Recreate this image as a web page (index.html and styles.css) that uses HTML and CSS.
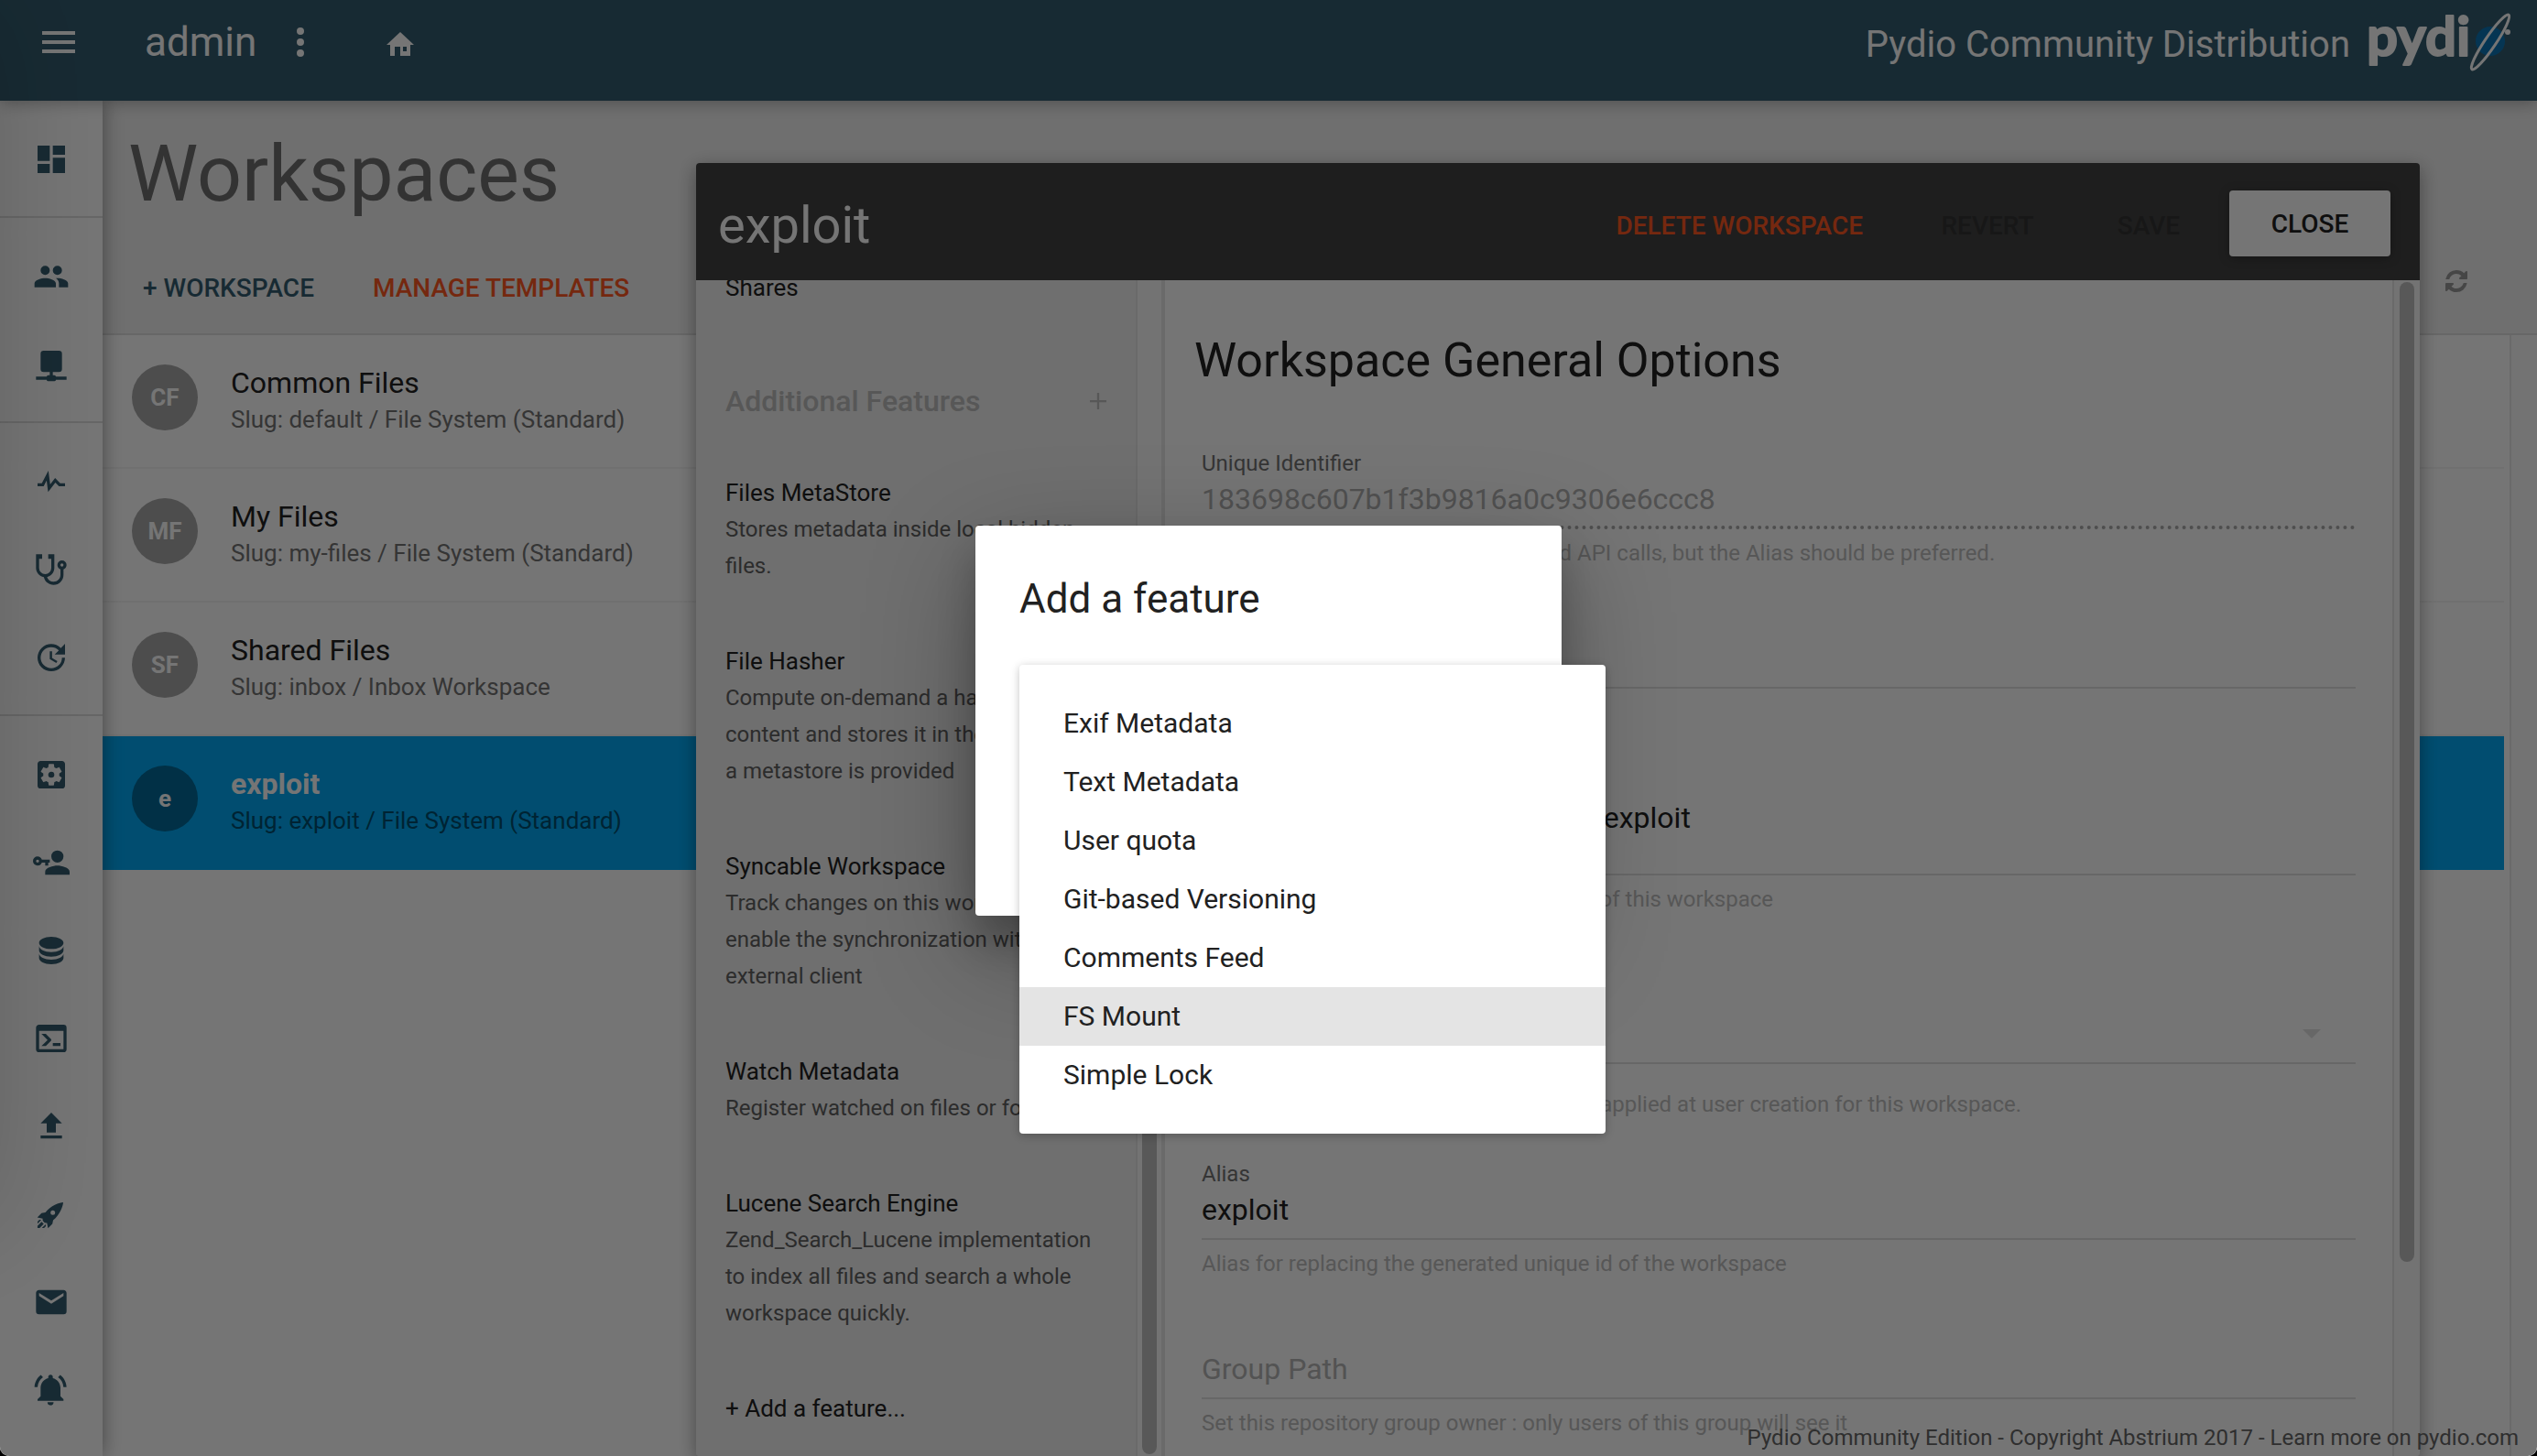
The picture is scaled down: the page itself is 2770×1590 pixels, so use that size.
FILE: index.html
```html
<!DOCTYPE html>
<html lang="en">
<head>
<meta charset="utf-8">
<title>Pydio - Workspaces</title>
<link rel="stylesheet" href="styles.css">
</head>
<body>
<div class="app">
  <header class="topbar">
    <button class="icon-button" aria-label="Menu"><svg class="icon-lg" viewBox="0 0 24 24"><path d="M3,6H21V8H3V6M3,11H21V13H3V11M3,16H21V18H3V16Z"/></svg></button>
    <span class="user">admin</span>
    <button class="icon-button more" aria-label="More"><svg class="icon-lg" viewBox="0 0 24 24"><path d="M12,16A2,2 0 0,1 14,18A2,2 0 0,1 12,20A2,2 0 0,1 10,18A2,2 0 0,1 12,16M12,10A2,2 0 0,1 14,12A2,2 0 0,1 12,14A2,2 0 0,1 10,12A2,2 0 0,1 12,10M12,4A2,2 0 0,1 14,6A2,2 0 0,1 12,8A2,2 0 0,1 10,6A2,2 0 0,1 12,4Z"/></svg></button>
    <button class="icon-button home" aria-label="Home"><svg class="icon-home" viewBox="0 0 30 26"><path fill-rule="evenodd" d="M15 0L30 14H26V26H15V16H9V26H4V14H0ZM18 16V21H22V16Z"/></svg></button>
    <span class="product">Pydio Community Distribution</span>
    <svg class="logo" viewBox="0 0 160 70" role="img" aria-label="pydio">
      <circle cx="135" cy="34" r="16" fill="#0b74b5"/>
      <ellipse cx="135" cy="35" rx="36" ry="6" transform="rotate(-56 135 35)" fill="none" stroke="#fff" stroke-width="3"/>
      <circle cx="154" cy="24" r="3" fill="#fff"/>
      <text x="0" y="50" class="logo-text">pydi</text>
    </svg>
  </header>

  <div class="below">
    <nav class="sidebar">
      <div class="group">
        <a href="#" aria-label="Dashboard"><svg viewBox="0 0 24 24"><path d="M13,3V9H21V3M13,21H21V11H13M3,21H11V15H3M3,13H11V3H3V13Z"/></svg></a>
      </div>
      <div class="group">
        <a href="#" aria-label="Users"><svg viewBox="0 0 24 24"><path d="M16,13C15.71,13 15.38,13 15.03,13.05C16.19,13.89 17,15 17,16.5V19H23V16.5C23,14.17 18.33,13 16,13M8,13C5.67,13 1,14.17 1,16.5V19H15V16.5C15,14.17 10.33,13 8,13M8,11A3,3 0 0,0 11,8A3,3 0 0,0 8,5A3,3 0 0,0 5,8A3,3 0 0,0 8,11M16,11A3,3 0 0,0 19,8A3,3 0 0,0 16,5A3,3 0 0,0 13,8A3,3 0 0,0 16,11Z"/></svg></a>
        <a href="#" aria-label="Workspaces"><svg viewBox="0 0 24 24"><path d="M17,3A2,2 0 0,1 19,5V15A2,2 0 0,1 17,17H13V19H14A1,1 0 0,1 15,20H22V22H15A1,1 0 0,1 14,23H10A1,1 0 0,1 9,22H2V20H9A1,1 0 0,1 10,19H11V17H7A2,2 0 0,1 5,15V5A2,2 0 0,1 7,3H17Z"/></svg></a>
      </div>
      <div class="group">
        <a href="#" aria-label="Activity"><svg viewBox="0 0 24 24"><path d="M3,13H5.79L10.1,4.79L11.28,13.75L14.5,9.66L17.83,13H21V15H17L14.67,12.67L9.92,18.73L8.94,11.31L7,15H3V13Z"/></svg></a>
        <a href="#" aria-label="Diagnostics"><svg viewBox="0 0 24 24"><path d="M19,8C19.56,8 20,8.43 20,9A1,1 0 0,1 19,10C18.43,10 18,9.55 18,9C18,8.43 18.43,8 19,8M2,2V11C2,13.96 4.19,16.5 7.14,16.91C7.76,19.92 10.42,22 13.5,22A6.5,6.5 0 0,0 20,15.5V11.81C21.16,11.39 22,10.29 22,9A3,3 0 0,0 19,6A3,3 0 0,0 16,9C16,10.29 16.84,11.4 18,11.81V15.41C18,17.91 16,19.91 13.5,19.91C11.5,19.91 9.82,18.7 9.22,16.9C12,16.3 14,13.8 14,11V2H10V5H12V11A4,4 0 0,1 8,15A4,4 0 0,1 4,11V5H6V2H2Z"/></svg></a>
        <a href="#" aria-label="Updates"><svg viewBox="0 0 24 24"><path d="M21,10.12H14.22L16.96,7.3C14.23,4.6 9.81,4.5 7.08,7.2C4.35,9.91 4.35,14.28 7.08,17C9.81,19.7 14.23,19.7 16.96,17C18.32,15.65 19,14.08 19,12.1H21C21,14.08 20.12,16.65 18.36,18.39C14.85,21.87 9.15,21.87 5.64,18.39C2.14,14.92 2.11,9.28 5.62,5.81C9.13,2.34 14.76,2.34 18.27,5.81L21,3V10.12M12.5,8V12.25L16,14.33L15.28,15.54L11,13V8H12.5Z"/></svg></a>
      </div>
      <div class="group">
        <a href="#" aria-label="Settings"><svg viewBox="0 0 24 24"><path d="M17.25,12C17.25,12.23 17.23,12.46 17.2,12.68L18.68,13.84C18.81,13.95 18.85,14.13 18.76,14.29L17.36,16.71C17.27,16.86 17.09,16.92 16.93,16.86L15.19,16.16C14.83,16.44 14.43,16.67 14,16.85L13.75,18.7C13.72,18.87 13.57,19 13.4,19H10.6C10.43,19 10.28,18.87 10.25,18.7L10,16.85C9.56,16.67 9.17,16.44 8.81,16.16L7.07,16.86C6.91,16.92 6.73,16.86 6.64,16.71L5.24,14.29C5.15,14.13 5.19,13.95 5.32,13.84L6.8,12.68C6.77,12.46 6.75,12.23 6.75,12C6.75,11.77 6.77,11.54 6.8,11.32L5.32,10.16C5.19,10.05 5.15,9.86 5.24,9.71L6.64,7.29C6.73,7.13 6.91,7.07 7.07,7.13L8.81,7.84C9.17,7.56 9.56,7.32 10,7.15L10.25,5.29C10.28,5.13 10.43,5 10.6,5H13.4C13.57,5 13.72,5.13 13.75,5.29L14,7.15C14.43,7.32 14.83,7.56 15.19,7.84L16.93,7.13C17.09,7.07 17.27,7.13 17.36,7.29L18.76,9.71C18.85,9.86 18.81,10.05 18.68,10.16L17.2,11.32C17.23,11.54 17.25,11.77 17.25,12M19,3H5C3.89,3 3,3.89 3,5V19A2,2 0 0,0 5,21H19A2,2 0 0,0 21,19V5C21,3.89 20.1,3 19,3M12,10C10.89,10 10,10.89 10,12A2,2 0 0,0 12,14A2,2 0 0,0 14,12A2,2 0 0,0 12,10Z"/></svg></a>
        <a href="#" aria-label="Authentication"><svg viewBox="0 0 24 24"><path d="M11,10V12H10V14H8V12H5.83C5.42,13.17 4.31,14 3,14A3,3 0 0,1 0,11A3,3 0 0,1 3,8C4.31,8 5.42,8.83 5.83,10H11M3,10A1,1 0 0,0 2,11A1,1 0 0,0 3,12A1,1 0 0,0 4,11A1,1 0 0,0 3,10M16,14C18.67,14 24,15.34 24,18V20H8V18C8,15.34 13.33,14 16,14M16,12A4,4 0 0,1 12,8A4,4 0 0,1 16,4A4,4 0 0,1 20,8A4,4 0 0,1 16,12Z"/></svg></a>
        <a href="#" aria-label="Storage"><svg viewBox="0 0 24 24"><path d="M12,3C7.58,3 4,4.79 4,7C4,9.21 7.58,11 12,11C16.42,11 20,9.21 20,7C20,4.79 16.42,3 12,3M4,9V12C4,14.21 7.58,16 12,16C16.42,16 20,14.21 20,12V9C20,11.21 16.42,13 12,13C7.58,13 4,11.21 4,9M4,14V17C4,19.21 7.58,21 12,21C16.42,21 20,19.21 20,17V14C20,16.21 16.42,18 12,18C7.58,18 4,16.21 4,14Z"/></svg></a>
        <a href="#" aria-label="Console"><svg viewBox="0 0 24 24"><path d="M20,19V7H4V19H20M20,3A2,2 0 0,1 22,5V19A2,2 0 0,1 20,21H4A2,2 0 0,1 2,19V5C2,3.89 2.9,3 4,3H20M13,17V15H18V17H13M9.58,13L5.57,9H8.4L11.7,12.3C12.09,12.69 12.09,13.33 11.7,13.72L8.42,17H5.59L9.58,13Z"/></svg></a>
        <a href="#" aria-label="Uploaders"><svg viewBox="0 0 24 24"><path d="M9,16V10H5L12,3L19,10H15V16H9M5,20V18H19V20H5Z"/></svg></a>
        <a href="#" aria-label="Boosters"><svg viewBox="0 0 24 24"><path d="M2.81,14.12L5.64,11.29L8.17,10.79C11.39,6.41 17.55,4.22 19.78,4.22C19.78,6.45 17.59,12.61 13.21,15.83L12.71,18.36L9.88,21.19L9.17,17.66C7.76,17.66 7.76,17.66 7.05,16.95C6.34,16.24 6.34,16.24 6.34,14.83L2.81,14.12M5.64,16.95L7.05,18.36L4.39,21.03H2.97V19.61L5.64,16.95M4.22,15.54L5.46,15.71L3,18.16V16.74L4.22,15.54M8.29,18.54L8.46,19.78L7.26,21H5.84L8.29,18.54M13,9.5A1.5,1.5 0 0,0 11.5,11A1.5,1.5 0 0,0 13,12.5A1.5,1.5 0 0,0 14.5,11A1.5,1.5 0 0,0 13,9.5Z"/></svg></a>
        <a href="#" aria-label="Mailers"><svg viewBox="0 0 24 24"><path d="M20,8L12,13L4,8V6L12,11L20,6M20,4H4C2.89,4 2,4.89 2,6V18A2,2 0 0,0 4,20H20A2,2 0 0,0 22,18V6C22,4.89 21.1,4 20,4Z"/></svg></a>
        <a href="#" aria-label="Notifications"><svg viewBox="0 0 24 24"><path d="M11.5,22C11.64,22 11.77,22 11.9,21.96C12.55,21.82 13.09,21.38 13.34,20.78C13.44,20.54 13.5,20.27 13.5,20H9.5A2,2 0 0,0 11.5,22M18,10.5C18,7.43 15.86,4.86 13,4.18V3.5A1.5,1.5 0 0,0 11.5,2A1.5,1.5 0 0,0 10,3.5V4.18C7.13,4.86 5,7.43 5,10.5V16L3,18V19H20V18L18,16M19.97,10H21.97C21.82,6.79 20.24,3.97 17.85,2.15L16.42,3.58C18.46,5 19.82,7.35 19.97,10M6.58,3.58L5.15,2.15C2.76,3.97 1.18,6.79 1,10H3C3.18,7.35 4.54,5 6.58,3.58Z"/></svg></a>
      </div>
    </nav>

    <main class="main">
      <div class="page-head">
        <h1>Workspaces</h1>
        <div class="page-actions">
          <button class="flat primary">+ WORKSPACE</button>
          <button class="flat accent">MANAGE TEMPLATES</button>
          <button class="icon-button refresh" aria-label="Refresh"><svg class="icon-refresh" viewBox="0 0 1536 1536"><path d="M1511 928q0 5-1 7-64 268-268 434.500t-478 166.500q-146 0-282.500-55t-243.500-157l-129 129q-19 19-45 19t-45-19-19-45v-448q0-26 19-45t45-19h448q26 0 45 19t19 45-19 45l-137 137q71 66 161 102t187 36q134 0 250-65t186-179q11-17 53-117 8-23 30-23h192q13 0 22.500 9.500t9.500 22.500zm25-800v448q0 26-19 45t-45 19h-448q-26 0-45-19t-19-45 19-45l138-138q-148-137-349-137-134 0-250 65t-186 179q-11 17-53 117-8 23-30 23h-199q-13 0-22.500-9.500t-9.500-22.500v-7q65-268 270-434.500t480-166.500q146 0 284 55.500t245 156.500l130-129q19-19 45-19t45 19 19 45z"/></svg></button>
        </div>
      </div>
      <div class="list-area">
        <ul class="list">
          <li><span class="avatar">CF</span><div class="entry"><div class="name">Common Files</div><div class="slug">Slug: default / File System (Standard)</div></div></li>
          <li><span class="avatar">MF</span><div class="entry"><div class="name">My Files</div><div class="slug">Slug: my-files / File System (Standard)</div></div></li>
          <li><span class="avatar">SF</span><div class="entry"><div class="name">Shared Files</div><div class="slug">Slug: inbox / Inbox Workspace</div></div></li>
          <li class="selected"><span class="avatar">e</span><div class="entry"><div class="name">exploit</div><div class="slug">Slug: exploit / File System (Standard)</div></div></li>
        </ul>
        <div class="track"></div>
      </div>
    </main>
  </div>

  <section class="editor" aria-label="Workspace editor">
    <header class="editor-head">
      <h2>exploit</h2>
      <button class="flat accent delete">DELETE WORKSPACE</button>
      <button class="flat" disabled>REVERT</button>
      <button class="flat" disabled>SAVE</button>
      <button class="flat raised">CLOSE</button>
    </header>
    <div class="editor-body">
      <div class="features">
        <div class="feature"><h4>Shares</h4></div>
        <div class="features-head"><h3>Additional Features</h3><button class="icon-button" aria-label="Add"><svg class="icon-plus" viewBox="0 0 16 16"><path d="M7 0H9V7H16V9H9V16H7V9H0V7H7Z"/></svg></button></div>
        <div class="feature"><h4>Files MetaStore</h4><p>Stores metadata inside local hidden files.</p></div>
        <div class="feature"><h4>File Hasher</h4><p>Compute on-demand a hash of the content and stores it in the index if a&nbsp;metastore is provided</p></div>
        <div class="feature"><h4>Syncable Workspace</h4><p>Track changes on this workspace to enable the synchronization with an external client</p></div>
        <div class="feature"><h4>Watch Metadata</h4><p>Register watched on files or folders</p></div>
        <div class="feature"><h4>Lucene Search Engine</h4><p>Zend_Search_Lucene implementation to index all files and search a whole workspace quickly.</p></div>
        <div class="feature"><h4>+ Add a feature...</h4></div>
      </div>
      <div class="track end"><div class="thumb half"></div></div>
      <form class="options">
        <h2>Workspace General Options</h2>
        <div class="field"><label for="uid">Unique Identifier</label><input id="uid" value="183698c607b1f3b9816a0c9306e6ccc8" disabled><p>Unique id can be used for CLI tool and API calls, but the Alias should be preferred.</p></div>
        <div class="field"><label for="name">Label</label><input id="name" value="exploit"><p>Workspace label</p></div>
        <div class="field tall"><label for="path">Path</label><input id="path" value="AJXP_DATA_PATH/my-shares/exploit"><p>Real path to the root folder on the server of this workspace</p></div>
        <div class="field choice"><label for="right">Default Rights</label><select id="right"><option>None</option></select><svg class="caret" viewBox="0 0 20 10"><path d="M0 0H20L10 10Z"/></svg><p>This default setting will be automatically applied at user creation for this workspace.</p></div>
        <div class="field"><label for="alias">Alias</label><input id="alias" value="exploit"><p>Alias for replacing the generated unique id of the workspace</p></div>
        <div class="field"><label for="group"></label><input id="group" placeholder="Group Path" aria-label="Group Path"><p>Set this repository group owner : only users of this group will see it</p></div>
      </form>
      <div class="track"><div class="thumb long"></div></div>
    </div>
  </section>

  <footer class="credits">Pydio Community Edition - Copyright Abstrium 2017 - Learn more on <a href="#">pydio.com</a></footer>
  <div class="drawer"></div>

  <div class="overlay">
    <div class="modal" role="dialog" aria-labelledby="modal-title">
      <h3 id="modal-title">Add a feature</h3>
      <ul class="menu">
        <li><button>Exif Metadata</button></li>
        <li><button>Text Metadata</button></li>
        <li><button>User quota</button></li>
        <li><button>Git-based Versioning</button></li>
        <li><button>Comments Feed</button></li>
        <li><button class="hovered">FS Mount</button></li>
        <li><button>Simple Lock</button></li>
      </ul>
    </div>
  </div>
</div>
</body>
</html>
```
FILE: styles.css
```css
* { box-sizing: border-box; }
body {
  margin: 0;
  background: #000;
  font-family: Roboto, "Liberation Sans", sans-serif;
  color: #212121;
}
h1, h2, h3, h4, p, ul { margin: 0; padding: 0; font-weight: 400; }
ul { list-style: none; }
button, input, select { font: inherit; color: inherit; border: 0; background: none; padding: 0; margin: 0; }
svg { display: block; fill: currentColor; }
a { color: inherit; text-decoration: none; }

.app {
  position: relative;
  height: 100vh;
  overflow: hidden;
  display: flex;
  flex-direction: column;
  background: #f1f1f1;
  border-radius: 0 0 10px 10px;
}

/* Top bar */
.topbar {
  position: relative;
  z-index: 3;
  flex: none;
  height: 110px;
  padding: 0 26px 18px 40px;
  display: flex;
  align-items: center;
  background: #345d70;
  color: #fff;
  box-shadow: 0 2px 16px rgba(0, 0, 0, .3);
}
.icon-lg { width: 48px; height: 48px; }
.icon-home { width: 30px; height: 26px; }
.user { margin-left: 70px; font-size: 44px; }
.more { margin-left: 24px; }
.home { margin: 4px 0 0 70px; }
.product { margin-left: auto; padding-top: 4px; font-size: 40px; }
.logo { width: 160px; height: 70px; margin-left: 18px; overflow: visible; }
.logo-text { font: 700 60px Lato, sans-serif; fill: #fff; stroke: #fff; stroke-width: 2; stroke-linejoin: round; }

.below { flex: 1; min-height: 0; display: flex; }

/* Icon sidebar */
.sidebar {
  position: relative;
  z-index: 2;
  flex: 0 0 112px;
  background: #fff;
  color: #345d70;
  box-shadow: 0 0 20px rgba(0, 0, 0, .4);
}
.group { padding: 16px 0 14px; border-bottom: 2px solid #e0e0e0; }
.group:last-child { border-bottom: 0; }
.group a { display: flex; height: 96px; align-items: center; justify-content: center; }
.group svg { width: 40px; height: 40px; }

/* Workspace list */
.main { flex: 1; min-width: 0; display: flex; flex-direction: column; }
.page-head { padding: 30px 12px 14px; border-bottom: 2px solid #e0e0e0; }
h1 { padding-left: 16px; font-size: 86px; line-height: 100px; color: #707070; }
.page-actions { display: flex; align-items: center; margin-top: 38px; }
.flat { height: 72px; min-width: 176px; padding: 0 32px; font-size: 28px; font-weight: 500; border-radius: 4px; }
.primary { color: #345d70; }
.accent { color: #ff5722; }
.refresh { margin: -14px 64px 0 auto; color: #999; }
.icon-refresh { width: 24px; height: 24px; }
.list-area { flex: 1; display: flex; background: #fff; }
.list { flex: 1; margin-right: 6px; }
.list li {
  display: flex;
  align-items: center;
  gap: 36px;
  height: 146px;
  padding: 0 32px 8px;
  border-bottom: 2px solid #f5f5f5;
}
.avatar {
  width: 72px;
  height: 72px;
  border-radius: 50%;
  background: #a8a8a8;
  color: #fff;
  font-size: 26px;
  font-weight: 700;
  line-height: 72px;
  text-align: center;
}
.entry { padding-top: 8px; }
.name { font-size: 32px; line-height: 40px; }
.slug { font-size: 26px; line-height: 40px; color: #757575; }
.list .selected { background: #03a9f4; border-color: #03a9f4; }
.selected .name { color: #fff; font-weight: 700; }
.selected .slug { color: #014e70; }
.selected .avatar { background: #036998; }

/* Scroll bars */
.track {
  flex: 0 0 30px;
  display: flex;
  flex-direction: column;
  align-items: center;
  padding: 2px 0;
  background: #fafafa;
  border-left: 2px solid #e8e8e8;
}
.track.end { flex-basis: 32px; justify-content: flex-end; border-right: 4px solid #e8e8e8; }
.thumb { width: 16px; border-radius: 8px; background: #c1c1c1; }
.half { height: 50%; }
.long { height: 1070px; max-height: 84%; }

/* Workspace editor */
.editor {
  position: absolute;
  z-index: 4;
  top: 178px;
  right: 128px;
  bottom: 0;
  left: 760px;
  display: flex;
  flex-direction: column;
  border-radius: 4px;
  overflow: hidden;
  background: #fff;
  box-shadow: 0 6px 20px rgba(0, 0, 0, .16), 0 6px 20px rgba(0, 0, 0, .23);
}
.editor-head {
  flex: none;
  display: flex;
  align-items: center;
  height: 128px;
  padding: 4px 32px 0 24px;
  background: #424242;
}
.editor-head h2 { margin-right: auto; padding-top: 4px; color: #fff; font-size: 56px; }
.editor-head .flat:not(.raised) { padding-top: 4px; }
.delete { margin-right: 16px; }
.flat:disabled { color: #333; }
.raised { background: #fff; box-shadow: 0 2px 12px rgba(0, 0, 0, .3); }
.editor-body { flex: 1; min-height: 0; display: flex; }

.features { flex: 0 0 480px; overflow: hidden; background: #f1f1f1; }
.feature { padding: 32px; }
.feature:first-child { margin-top: -44px; }
.feature h4 { font-size: 26px; line-height: 40px; }
.feature p { font-size: 24px; line-height: 40px; color: #616161; }
.features-head { display: flex; align-items: center; justify-content: space-between; padding: 0 32px; margin: 52px 0 28px; color: #bdbdbd; }
.features-head h3 { font-size: 32px; line-height: 40px; font-weight: 500; }
.icon-plus { width: 18px; height: 18px; }

.options { flex: 1; min-width: 0; overflow: hidden; padding: 56px 40px 0; }
.options h2 { margin: 0 0 64px -8px; font-size: 52px; line-height: 64px; }
.field { position: relative; margin-bottom: 44px; }
.field label { display: block; height: 32px; font-size: 24px; line-height: 32px; color: #757575; }
.field input { display: block; width: 100%; height: 56px; padding-bottom: 8px; font-size: 32px; border-bottom: 2px solid #e0e0e0; }
.field p { padding-top: 10px; font-size: 24px; line-height: 32px; color: #bdbdbd; }
.field input::placeholder { color: #b5b5b5; opacity: 1; }
.field input:disabled { padding-bottom: 6px; color: #b0b0b0; border-bottom: 4px dotted #aaa; }
.field.tall input { height: 86px; padding-bottom: 38px; }
.choice select { display: block; width: 100%; height: 88px; font-size: 32px; appearance: none; border-bottom: 2px solid #e0e0e0; }
.choice p { padding-top: 28px; }
.caret { position: absolute; right: 38px; top: 82px; width: 20px; height: 10px; color: #e0e0e0; }

.credits { position: absolute; z-index: 5; right: 20px; bottom: 4px; font-size: 24px; line-height: 32px; color: #666; }

/* Closed drawer waiting off the left edge */
.drawer { position: absolute; z-index: 5; left: -256px; top: 0; width: 256px; height: 1340px; max-height: 85%; box-shadow: 0 0 120px rgba(0, 0, 0, .16); }

/* Modal */
.overlay {
  position: absolute;
  z-index: 6;
  inset: 0;
  display: flex;
  align-items: center;
  justify-content: center;
  padding-bottom: 16px;
  background: rgba(0, 0, 0, .54);
}
.modal {
  position: relative;
  width: 640px;
  height: 426px;
  padding: 48px;
  background: #fff;
  border-radius: 4px;
  box-shadow: 0 38px 120px rgba(0, 0, 0, .3), 0 30px 40px rgba(0, 0, 0, .22);
}
.modal h3 { font-size: 44px; line-height: 64px; }
.menu {
  position: absolute;
  left: 48px;
  top: 152px;
  width: 640px;
  padding: 32px 0;
  background: #fff;
  border-radius: 4px;
  box-shadow: 0 2px 12px rgba(0, 0, 0, .12), 0 2px 8px rgba(0, 0, 0, .12);
}
.menu button { display: block; width: 100%; height: 64px; padding: 0 48px 2px; font-size: 30px; text-align: left; }
.menu .hovered { background: #e4e4e4; }
```
